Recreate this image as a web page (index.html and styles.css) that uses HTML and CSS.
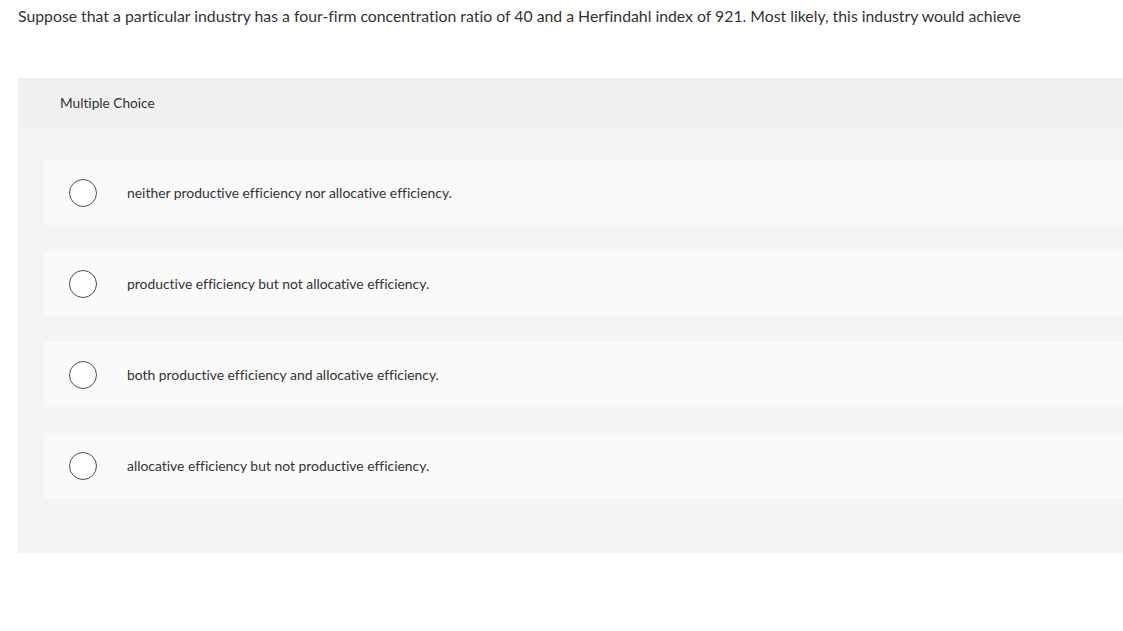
FILE: index.html
```html
<!DOCTYPE html>
<html>
<head>
<meta charset="utf-8">
<link rel="stylesheet" href="styles.css">
</head>
<body>
<p class="question">Suppose that a particular industry has a four-firm concentration ratio of 40 and a Herfindahl index of 921. Most likely, this industry would achieve</p>
<div class="panel">
  <div class="panel-head">Multiple Choice</div>
  <div class="panel-body">
    <div class="option"><span class="radio"></span><span class="label">neither productive efficiency nor allocative efficiency.</span></div>
    <div class="option"><span class="radio"></span><span class="label">productive efficiency but not allocative efficiency.</span></div>
    <div class="option"><span class="radio"></span><span class="label">both productive efficiency and allocative efficiency.</span></div>
    <div class="option"><span class="radio"></span><span class="label">allocative efficiency but not productive efficiency.</span></div>
  </div>
</div>
</body>
</html>
```
FILE: styles.css
```css
html, body {
  margin: 0;
  padding: 0;
  background: #ffffff;
  font-family: "Lato", "Liberation Sans", Arial, sans-serif;
  font-variant-ligatures: none;
  color: #333333;
}
.question {
  margin: 0;
  padding: 6px 0 0 18px;
  font-size: 15.8px;
  line-height: 20px;
  white-space: nowrap;
}
.panel {
  margin: 52px 0 0 18px;
  background: #f4f4f4;
}
.panel-head {
  height: 49px;
  display: flex;
  align-items: center;
  padding-left: 42px;
  background: #f0f0f0;
  font-size: 13.7px;
  color: #333333;
}
.panel-body {
  padding: 33px 0 55px 26px;
  display: flex;
  flex-direction: column;
  gap: 26px;
}
.option {
  height: 65px;
  display: flex;
  align-items: center;
  padding-left: 25px;
  background: #fafafa;
}
.radio {
  box-sizing: border-box;
  width: 28px;
  height: 28px;
  border: 1.5px solid #3f5169;
  border-radius: 50%;
  background: #ffffff;
  flex: none;
}
.label {
  margin-left: 30px;
  font-size: 13.9px;
  color: #333333;
}
```
